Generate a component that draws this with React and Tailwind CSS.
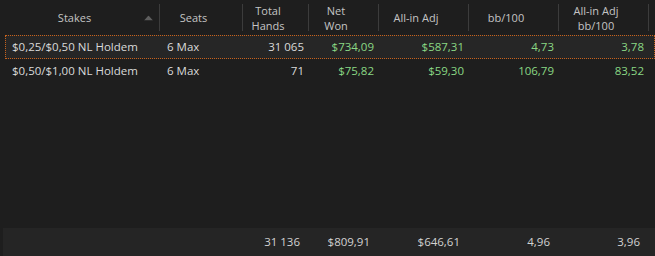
import React from 'react'

const columns = [
  { key: 'stakes', label: ['Stakes'], w: 'w-[155px]', align: 'left', sorted: true },
  { key: 'seats', label: ['Seats'], w: 'w-[83px]', align: 'left' },
  { key: 'hands', label: ['Total', 'Hands'], w: 'w-[66px]', align: 'right' },
  { key: 'net', label: ['Net', 'Won'], w: 'w-[70px]', align: 'right', green: true },
  { key: 'adj', label: ['All-in Adj'], w: 'w-[90px]', align: 'right', green: true },
  { key: 'bb', label: ['bb/100'], w: 'w-[90px]', align: 'right', green: true },
  { key: 'adjbb', label: ['All-in Adj', 'bb/100'], w: 'w-[90px]', align: 'right', green: true },
]

const rows = [
  { stakes: '$0,25/$0,50 NL Holdem', seats: '6 Max', hands: '31 065', net: '$734,09', adj: '$587,31', bb: '4,73', adjbb: '3,78', selected: true },
  { stakes: '$0,50/$1,00 NL Holdem', seats: '6 Max', hands: '71', net: '$75,82', adj: '$59,30', bb: '106,79', adjbb: '83,52' },
]

const totals = { hands: '31 136', net: '$809,91', adj: '$646,61', bb: '4,96', adjbb: '3,96' }

const HeaderCell = ({ col }) => (
  <div className={`${col.w} relative my-[4px] flex items-center border-r border-[#3c3c3c]`}>
    <div className="flex-1 pr-[15px] text-center text-[11px] leading-[15px]">
      {col.label.map((l) => (
        <div key={l}>{l}</div>
      ))}
    </div>
    {col.sorted && (
      <svg className="absolute right-[6px] top-1/2 -translate-y-1/2" width="9" height="5" viewBox="0 0 9 5">
        <path d="M0 5 L4.5 0 L9 5 Z" fill="#5e5e5e" />
      </svg>
    )}
  </div>
)

const App = () => {
  return (
    <div
      className="flex h-[256px] w-[655px] flex-col overflow-hidden bg-[#1e1e1e] text-[11.5px] text-[#dadada]"
      style={{ fontFamily: '"Segoe UI", "Open Sans", "Liberation Sans", sans-serif' }}
    >
      {/* Header */}
      <div className="flex h-[35px] pl-[5px] text-[#c4c4c4]">
        {columns.map((col) => (
          <HeaderCell key={col.key} col={col} />
        ))}
      </div>

      {/* Body rows */}
      <div className="flex-1">
        {rows.map((row) => (
          <div
            key={row.stakes}
            className={`ml-[5px] flex h-[24px] items-center border ${
              row.selected ? 'border-dotted border-[#c8621c] bg-[#262626]' : 'border-transparent'
            }`}
          >
            {columns.map((col) => (
              <div
                key={col.key}
                className={`${col.w} shrink-0 px-[6px] ${col.align === 'right' ? 'text-right' : 'text-left'} ${
                  col.green ? 'text-[#8ad884]' : ''
                }`}
              >
                {row[col.key]}
              </div>
            ))}
          </div>
        ))}
      </div>

      {/* Totals */}
      <div className="ml-[3px] flex h-[28px] items-center bg-[#252525] pl-[2px] text-[#d2d2d2]">
        {columns.map((col) => (
          <div key={col.key} className={`${col.w} shrink-0 pl-[6px] pr-[9px] text-right`}>
            {totals[col.key] || ''}
          </div>
        ))}
      </div>
    </div>
  )
}

export default App
